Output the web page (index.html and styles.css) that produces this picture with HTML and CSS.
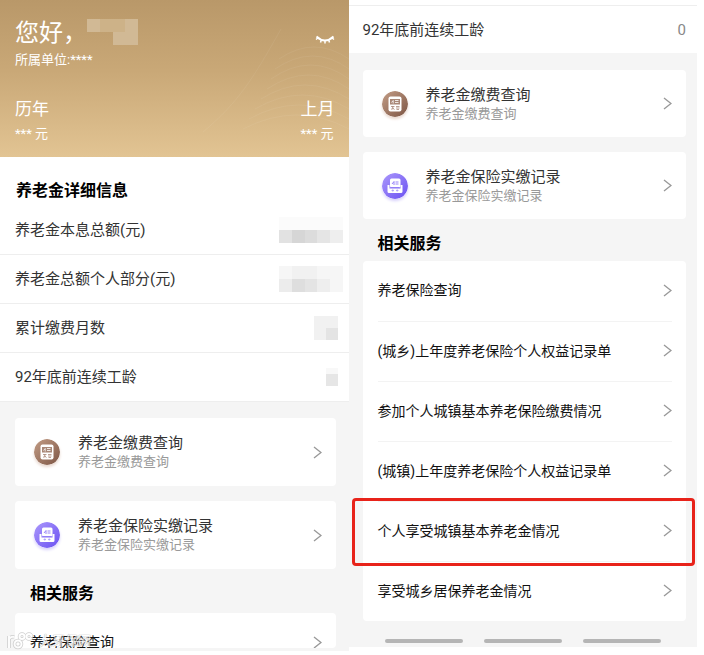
FILE: index.html
```html
<!DOCTYPE html>
<html lang="zh-CN">
<head>
  <meta charset="UTF-8">
  <title>养老金查询</title>
  <meta name="viewport" content="width=device-width, initial-scale=1.0">
  <link rel="stylesheet" href="styles.css">
</head>
<body>
  <!-- shared icons -->
  <svg class="defs" width="0" height="0" aria-hidden="true">
    <defs>
      <linearGradient id="brown" x1="0" y1="0" x2="1" y2="1">
        <stop offset="0" stop-color="#c39d86"/>
        <stop offset="1" stop-color="#7d5544"/>
      </linearGradient>
      <linearGradient id="purple" x1="0" y1="0" x2="1" y2="1">
        <stop offset="0" stop-color="#ab98fb"/>
        <stop offset="1" stop-color="#6a50f2"/>
      </linearGradient>
    </defs>
    <symbol id="chevron" viewBox="0 0 9 13">
      <path d="M1 1l7 5.5L1 12" fill="none" stroke="#999" stroke-width="1.4"/>
    </symbol>
    <symbol id="icon-query" viewBox="0 0 26 26">
      <circle cx="13" cy="13" r="13" fill="url(#brown)"/>
      <rect x="6.5" y="5.5" width="13" height="15" rx="2" fill="#fff"/>
      <rect x="8" y="8" width="10" height="5.5" fill="#a98878"/>
      <path d="M9.5 11.5l1.700-2v3M13 9.500h3.500M13 11.500h3.500" stroke="#fff" fill="none" stroke-width=".8"/>
      <path d="M9 15.500h3.500M10.800 15v3.500M9 18.500l1.800-1.500 1.700 1.500M14 15.500h3.500M14 17h3.500M14.500 18.500h2.500" stroke="#a98878" fill="none" stroke-width=".8"/>
    </symbol>
    <symbol id="icon-record" viewBox="0 0 26 26">
      <circle cx="13" cy="13" r="13" fill="url(#purple)"/>
      <rect x="8" y="5.500" width="10.500" height="9" rx="1.500" fill="#fff"/>
      <path d="M5.500 12h2v3.500h11V12h2v6.500q0 1.500-1.500 1.500H7q-1.500 0-1.500-1.500z" fill="#fff"/>
      <path d="M10 11l2-2.500v3.500M13.500 9h3M13.500 11h3M8.500 14.500h9" stroke="#8c77f6" fill="none" stroke-width=".9"/>
      <path d="M9.500 17.500h2.500M14 17.500h2.500M10.800 16.300v2.400M15.200 16.300v2.400" stroke="#a594fa" fill="none" stroke-width=".7"/>
    </symbol>
  </svg>

  <main class="screens">
    <section class="screen">
      <header class="hero">
        <svg class="hero-waves" viewBox="0 0 160 130" aria-hidden="true">
          <path d="M14 105C50 75 65 50 92 2" />
          <path d="M90 32q35-24 70 0M86 42q38-26 74 0M82 52q40-28 78 0M78 62q42-28 82 0M72 72q44-28 88 0M66 82q48-28 94 0M60 92q50-28 100 0M54 102q54-28 106 0" />
        </svg>
        <div class="hero-top">
          <div>
            <h1>您好，<svg class="name-mask" width="51" height="26" aria-hidden="true">
              <path d="M0 0h51v26H26V13H0z" fill="#d1b995"/>
              <path d="M13 0h25v13H13z" fill="#cdb288"/>
            </svg></h1>
            <p>所属单位:****</p>
          </div>
          <button class="eye" aria-label="显示金额">
            <svg width="20" height="9" viewBox="0 0 20 9">
              <path d="M1.500 1.500q8.500 8 17 0" fill="none" stroke="#fff" stroke-width="1.800"/>
              <path d="M3.500 2.500L1 4.500M6.500 4.500l-1 3M10 5.500v3M13.500 4.500l1 3M16.500 2.500l2.500 2" fill="none" stroke="#fff" stroke-width="1.500"/>
            </svg>
          </button>
        </div>
        <div class="hero-sums">
          <div>
            <h2>历年</h2>
            <p>*** 元</p>
          </div>
          <div>
            <h2>上月</h2>
            <p>*** 元</p>
          </div>
        </div>
      </header>

      <div class="details">
        <h2>养老金详细信息</h2>
        <div class="detail">
          <span>养老金本息总额(元)</span>
          <svg width="64" height="26" aria-hidden="true">
            <path d="M0 0h64v13H0z" fill="#fbfbfb"/>
            <path d="M0 13h13v13H0z" fill="#e2e2e2"/>
            <path d="M13 13h13v13H13z" fill="#d6d6d6"/>
            <path d="M26 13h12v13H26z" fill="#dcdcdc"/>
            <path d="M38 13h13v13H38z" fill="#e5e5e5"/>
            <path d="M51 13h13v13H51z" fill="#eee"/>
          </svg>
        </div>
        <div class="detail">
          <span>养老金总额个人部分(元)</span>
          <svg width="64" height="26" aria-hidden="true">
            <path d="M0 0h64v26H0z" fill="#f6f6f6"/>
            <path d="M13 0h25v13H13z" fill="#f1f1f1"/>
            <path d="M0 13h13v13H0z" fill="#ececec"/>
            <path d="M13 13h13v13H13z" fill="#dedede"/>
            <path d="M26 13h12v13H26z" fill="#e4e4e4"/>
            <path d="M38 13h13v13H38z" fill="#eee"/>
          </svg>
        </div>
        <div class="detail short">
          <span>累计缴费月数</span>
          <svg width="24" height="24" aria-hidden="true">
            <path d="M0 0h24v24H0z" fill="#f1f1f1"/>
            <path d="M12 12h12v12H12z" fill="#e4e4e4"/>
          </svg>
        </div>
        <div class="detail short">
          <span>92年底前连续工龄</span>
          <svg width="12" height="18" aria-hidden="true">
            <path d="M0 0h12v6H0z" fill="#f8f8f8"/>
            <path d="M0 6h12v12H0z" fill="#e6e6e6"/>
          </svg>
        </div>
      </div>

      <div class="content">
        <a class="card" href="#">
          <svg class="card-icon brown"><use href="#icon-query"/></svg>
          <span class="card-text">
            <strong>养老金缴费查询</strong>
            <small>养老金缴费查询</small>
          </span>
          <svg class="chevron"><use href="#chevron"/></svg>
        </a>
        <a class="card" href="#">
          <svg class="card-icon purple"><use href="#icon-record"/></svg>
          <span class="card-text">
            <strong>养老金保险实缴记录</strong>
            <small>养老金保险实缴记录</small>
          </span>
          <svg class="chevron"><use href="#chevron"/></svg>
        </a>
        <h2>相关服务</h2>
        <nav class="services cut">
          <a href="#">养老保险查询<svg class="chevron"><use href="#chevron"/></svg></a>
        </nav>
      </div>

      <div class="watermark" aria-hidden="true">
        <svg width="28" height="18" viewBox="0 0 28 18">
          <g fill="none" stroke="#bbb" stroke-width="3.500">
            <path d="M2 4v12M2 7q2-3 5-2"/>
            <circle cx="11" cy="12" r="3.500"/>
            <circle cx="15" cy="4.500" r="2.500"/>
            <circle cx="22" cy="4.500" r="2.500"/>
          </g>
          <g fill="none" stroke="#fff" stroke-width="2">
            <path d="M2 4v12M2 7q2-3 5-2"/>
            <circle cx="11" cy="12" r="3.500"/>
            <circle cx="15" cy="4.500" r="2.500"/>
            <circle cx="22" cy="4.500" r="2.500"/>
          </g>
        </svg>
        <span>大牙保网</span>
      </div>
    </section>

    <section class="screen scrolled">
      <div class="details">
        <div class="detail">
          <span>92年底前连续工龄</span>
          <span class="value">0</span>
        </div>
      </div>

      <div class="content">
        <a class="card" href="#">
          <svg class="card-icon brown"><use href="#icon-query"/></svg>
          <span class="card-text">
            <strong>养老金缴费查询</strong>
            <small>养老金缴费查询</small>
          </span>
          <svg class="chevron"><use href="#chevron"/></svg>
        </a>
        <a class="card" href="#">
          <svg class="card-icon purple"><use href="#icon-record"/></svg>
          <span class="card-text">
            <strong>养老金保险实缴记录</strong>
            <small>养老金保险实缴记录</small>
          </span>
          <svg class="chevron"><use href="#chevron"/></svg>
        </a>
        <h2>相关服务</h2>
        <nav class="services">
          <a href="#">养老保险查询<svg class="chevron"><use href="#chevron"/></svg></a>
          <a href="#">(城乡)上年度养老保险个人权益记录单<svg class="chevron"><use href="#chevron"/></svg></a>
          <a href="#">参加个人城镇基本养老保险缴费情况<svg class="chevron"><use href="#chevron"/></svg></a>
          <a href="#">(城镇)上年度养老保险个人权益记录单<svg class="chevron"><use href="#chevron"/></svg></a>
          <a class="marked" href="#">个人享受城镇基本养老金情况<svg class="chevron"><use href="#chevron"/></svg></a>
          <a href="#">享受城乡居保养老金情况<svg class="chevron"><use href="#chevron"/></svg></a>
        </nav>
      </div>
      <div class="navbar"><i></i><i></i><i></i></div>
    </section>
  </main>
</body>
</html>
```
FILE: styles.css
```css
* {
  box-sizing: border-box;
}
body {
  margin: 0;
  background: #fff;
  color: #333;
  font-family: Roboto, "Noto Sans CJK SC", sans-serif;
  font-size: 15px;
  line-height: 20px;
}
h1, h2, p {
  margin: 0;
}
a {
  color: inherit;
  text-decoration: none;
}
.defs {
  position: absolute;
}
.screens {
  display: grid;
  grid-template-columns: 1fr 1fr;
  align-items: start;
  padding-right: 7px;
}
.screen {
  position: relative;
  background: #f5f5f5;
}

/* gold header */
.hero {
  position: relative;
  padding: 19px 14px 14px 15px;
  background: linear-gradient(#b99869, #c9a877 45%, #e2c493);
  color: #fff;
}
.hero-waves {
  position: absolute;
  right: 0;
  bottom: 0;
  width: 160px;
  height: 130px;
  fill: none;
  stroke: #fff;
  stroke-opacity: .06;
}
.hero-top, .hero-sums {
  display: flex;
  justify-content: space-between;
}
.hero h1 {
  display: flex;
  font-size: 24px;
  font-weight: 400;
  line-height: 28px;
}
.hero p {
  font-size: 13px;
  line-height: 18px;
}
.hero-top p {
  margin-top: 4px;
}
.hero-sums {
  margin-top: 28px;
}
.hero-sums h2 {
  font-size: 17px;
  font-weight: 400;
  line-height: 24px;
}
.hero-sums p {
  margin-top: 4px;
}
.eye {
  align-self: flex-start;
  margin-top: 16px;
  padding: 0;
  border: 0;
  background: none;
  line-height: 0;
}

/* detail rows */
.details {
  background: #fff;
}
.details h2 {
  padding: 24px 16px 5px;
  color: #000;
  font-size: 16px;
}
.detail {
  display: flex;
  align-items: center;
  justify-content: space-between;
  height: 49px;
  padding: 0 6px 0 15px;
  border-bottom: 1px solid #eee;
}
.detail.short {
  padding-right: 11px;
}
.value {
  color: #888;
}

/* cards */
.content {
  padding: 16px 13px 0 15px;
}
.card {
  display: flex;
  align-items: center;
  height: 68px;
  margin-bottom: 15px;
  padding: 0 14px 0 19px;
  border-radius: 4px;
  background: #fff;
}
.card-icon {
  width: 26px;
  height: 26px;
  margin-right: 18px;
  border-radius: 50%;
}
.card-icon.brown {
  box-shadow: 0 2px 3px #e9d8cf;
}
.card-icon.purple {
  box-shadow: 0 2px 3px #d8d1fb;
}
.card-text {
  flex: 1;
}
.card-text strong, .card-text small {
  display: block;
  font-weight: 400;
}
.card-text small {
  color: #999;
  font-size: 13px;
  line-height: 18px;
}
.chevron {
  width: 9px;
  height: 13px;
}
.content h2 {
  padding: 0 15px 9px;
  color: #000;
  font-size: 16px;
}
.services {
  padding: 0 14px 0 15px;
  border-radius: 4px;
  background: #fff;
  color: #111;
  font-size: 14px;
}
.services a {
  position: relative;
  display: flex;
  align-items: center;
  justify-content: space-between;
  height: 60px;
  padding-bottom: 2px;
}
.services a + a {
  border-top: 1px solid #f3f3f3;
}
.services.cut {
  height: 35px;
  margin-bottom: 3px;
  overflow: hidden;
}
.services a.marked::after {
  content: "";
  position: absolute;
  inset: -4px -23px -5px -26px;
  border: 3px solid #e8231a;
  border-radius: 4px;
}

/* second screen */
.scrolled .details {
  padding-top: 5px;
}
.scrolled .detail {
  height: 48px;
  padding: 0 11px 0 14px;
  border-top: 1px solid #eee;
  border-bottom: 0;
}
.scrolled .content {
  padding: 17px 11px 0 14px;
}
.scrolled .card {
  height: 67px;
}
.scrolled .content h2 {
  padding-bottom: 7px;
}
.navbar {
  display: flex;
  justify-content: center;
  gap: 21px;
  padding: 18px 0 4px;
}
.navbar i {
  width: 78px;
  height: 4px;
  border-radius: 2px;
  background: #b5b5b5;
}

.watermark {
  position: absolute;
  left: 7px;
  bottom: 0;
  display: flex;
  align-items: center;
  gap: 4px;
  color: #fff;
  font-size: 13px;
  opacity: .7;
  text-shadow: 0 0 1px #888, 0 0 1px #888;
}
```
